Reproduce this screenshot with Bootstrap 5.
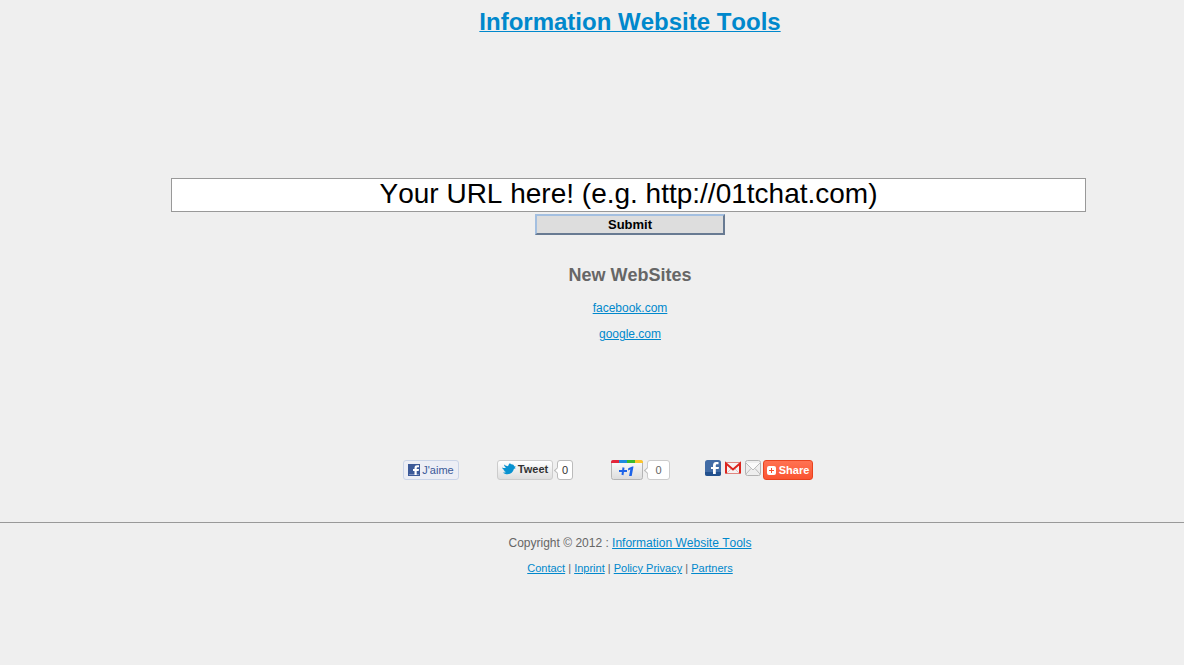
<!DOCTYPE html>
<html lang="en">
<head>
<meta charset="utf-8">
<meta name="viewport" content="width=device-width, initial-scale=1">
<title>Information Website Tools</title>
<link rel="stylesheet" href="https://cdn.jsdelivr.net/npm/bootstrap@5.3.0/dist/css/bootstrap.min.css">
<style>
body{background:#efefef;color:#666;font:12px/18px "Liberation Sans",Arial,sans-serif;font-kerning:none}
a{color:#08c;text-decoration-thickness:1px}
.shifted{padding-left:76px}
.site-head{height:178px;padding-top:6px}
.site-title{font-size:24px;line-height:32px;font-weight:bold}
.url-form{padding-right:3px}
.url-box{width:82.8%;height:34px;border:1px solid #999;padding:0 0 3px;font-size:28px;line-height:30px;color:#000;background:#fff;font-kerning:none}
.send-btn{width:190px;height:21px;margin:2px 0 0 3px;border:2px solid;border-color:#a3bfe0 #687a92 #687a92 #a3bfe0;background:#ddd;color:#000;font-size:13px;line-height:17px;font-weight:bold;padding:0}
.section-title{font-size:18px;line-height:24px;font-weight:bold;margin:28px 0 12px}
.site-list{height:161px}
.site-list li{margin-bottom:8px}
.share-row{padding-right:44px;gap:38px;height:62px}
.share-row button{height:20px;padding:0;border-radius:3px;font-size:11px;line-height:18px}
.like-btn{width:56px;gap:2px;border:1px solid #cad4e7;background:#eceef5;color:#3b5998}
.tweet-btn{width:56px;gap:2px;border:1px solid #ccc;background:linear-gradient(#fff,#dedede);color:#333;font-weight:bold}
.share-row .tweet-btn{padding-bottom:2px}
.count{position:relative;height:20px;border:1px solid #bbb;border-radius:3px;background:#fff;color:#333;font-size:11px;line-height:18px;text-align:center}
.count::before{content:"";position:absolute;left:-3px;top:7px;width:5px;height:5px;border:solid #bbb;border-width:0 0 1px 1px;background:#fff;transform:rotate(45deg)}
.tweet-count{width:16px;margin-left:4px}
.plus-count{width:23px;margin-left:4px;border-color:#ccc;color:#666}
.plus-btn{width:32px;border:0;background:none}
.share-icons{gap:4px;margin-left:-3px}
.share-btn{width:50px;gap:3px;margin-left:-2px;border:1px solid #e8431f;background:linear-gradient(#ff7252,#fb5432);color:#fff;font-weight:bold}
.site-foot{border-top:1px solid #999;padding-top:11px}
.foot-links{font-size:11px;margin-top:7px}
</style>
</head>
<body>
<header class="shifted site-head text-center">
  <h1 class="site-title m-0"><a href="#">Information Website Tools</a></h1>
</header>
<main class="shifted text-center">
  <form class="url-form d-flex flex-column align-items-center">
    <input class="url-box text-center" type="text" aria-label="Website URL" value="Your URL here! (e.g. http://01tchat.com)">
    <button class="send-btn" type="button">Submit</button>
  </form>
  <h2 class="section-title">New WebSites</h2>
  <ul class="site-list list-unstyled m-0">
    <li><a href="#">facebook.com</a></li>
    <li><a href="#">google.com</a></li>
  </ul>
  <div class="share-row d-flex justify-content-center align-items-start">
    <button type="button" class="like-btn d-flex align-items-center justify-content-center">
      <svg width="12" height="12" viewBox="0 0 12 12" aria-hidden="true"><path fill="#3b5998" d="M0 0h12v12H0z"/><path fill="#7f93bf" d="M1 10h10v1H1z"/><path fill="#fff" d="M6.500 11V7H5V5h1.500V4C6.500 2 7.600 1.300 9 1.300h2v2H9.700C9 3.300 8.700 3.500 8.700 4v1H11l-.3 2h-2v4z"/></svg>
      <span>J'aime</span>
    </button>
    <div class="d-flex">
      <button type="button" class="tweet-btn d-flex align-items-center justify-content-center">
        <svg width="14" height="12" viewBox="0 0 14 12" aria-hidden="true"><path fill="#0892d0" d="M0 4.500c2 .9 3.200.6 4 .2C2.500 3.700 2 2.500 2 1.500c1.400 1.300 2.700 1.600 4 1.700C6.400 2 7 .8 8 0c.2.800.6 1.100 1 1.200C10.800 1 12 1.900 12.200 3.300L14 3.800l-1.300.9 1 .7-1.700.4C11 9.500 8.500 11.300 5.500 11.300 3.500 11.300 2 10.500 1 9.500c1.200.2 2.200 0 3-.5C2.700 8.700 2 8 1.700 7.200h1.200C1.200 6.700.3 5.600 0 4.500z"/></svg>
        <span>Tweet</span>
      </button>
      <span class="count tweet-count">0</span>
    </div>
    <div class="d-flex">
      <button type="button" class="plus-btn d-flex" aria-label="+1">
        <svg width="32" height="20" viewBox="0 0 32 20" aria-hidden="true"><defs><linearGradient id="pg" x2="0" y2="1"><stop stop-color="#fcfcfc"/><stop offset="1" stop-color="#dcdcdc"/></linearGradient></defs><rect x=".5" y=".5" width="31" height="19" rx="2" fill="url(#pg)" stroke="#b4b4b4"/><path fill="#e3263a" d="M0 3V2Q0 0 2 0h6v3z"/><path fill="#1e8be0" d="M8 0h8v3H8z"/><path fill="#3bbb2b" d="M16 0h8v3h-8z"/><path fill="#fcc52c" d="M24 0h6q2 0 2 2v1h-8z"/><path fill="none" stroke="#1d63e8" stroke-width="2" d="M8 11h8M12.500 7.500l-1 7.500"/><path fill="#1d63e8" d="M17.300 8.300L21.300 6.500h1.200L20.700 16h-2.600l1.200-6.500-2.300 1z"/></svg>
      </button>
      <span class="count plus-count">0</span>
    </div>
    <div class="share-icons d-flex">
      <a href="#" aria-label="Facebook" class="d-flex"><svg width="16" height="16" viewBox="0 0 16 16" aria-hidden="true"><rect width="16" height="16" rx="2.500" fill="#416ba5"/><path fill="#23518e" d="M0 12h16v1.500Q16 16 13.500 16h-11Q0 16 0 13.500z"/><path fill="#fff" d="M8 14V9H6V7h2V5.500C8 3 9.300 2 11 2h2.500v2.300H12c-.8 0-1.200.3-1.200 1.200V7H14l-.4 2h-2.800v5z"/></svg></a>
      <a href="#" aria-label="Gmail" class="d-flex"><svg width="16" height="16" viewBox="0 0 16 16" aria-hidden="true"><rect x=".5" y="2.500" width="15" height="11" rx="1" fill="#f7f2f2" stroke="#e0867f"/><path fill="none" stroke="#d8c7c7" d="M2 13l4-4M14 13l-4-4"/><path fill="none" stroke="#dc251e" stroke-width="2" d="M1 13.500V3.500l7 6 7-6v10"/></svg></a>
      <a href="#" aria-label="Email" class="d-flex"><svg width="16" height="16" viewBox="0 0 16 16" aria-hidden="true"><rect x=".5" y=".5" width="15" height="15" rx="2" fill="#eee" stroke="#b3b3b3"/><path fill="#fafafa" stroke="#bbb" d="M1 3l7 7 7-7M1 14l5-5.500M15 14l-5-5.500"/></svg></a>
      <button type="button" class="share-btn d-flex align-items-center justify-content-center">
        <svg width="9" height="9" viewBox="0 0 9 9" aria-hidden="true"><rect width="9" height="9" rx="2" fill="#fff"/><path stroke="#f9502f" d="M2 4.500h5M4.500 2v5"/></svg>
        <span>Share</span>
      </button>
    </div>
  </div>
</main>
<footer class="shifted site-foot text-center">
  <p class="m-0">Copyright © 2012 : <a href="#">Information Website Tools</a></p>
  <p class="foot-links mb-0"><a href="#">Contact</a> | <a href="#">Inprint</a> | <a href="#">Policy Privacy</a> | <a href="#">Partners</a></p>
</footer>
<script src="https://cdn.jsdelivr.net/npm/bootstrap@5.3.0/dist/js/bootstrap.bundle.min.js"></script>
</body>
</html>
